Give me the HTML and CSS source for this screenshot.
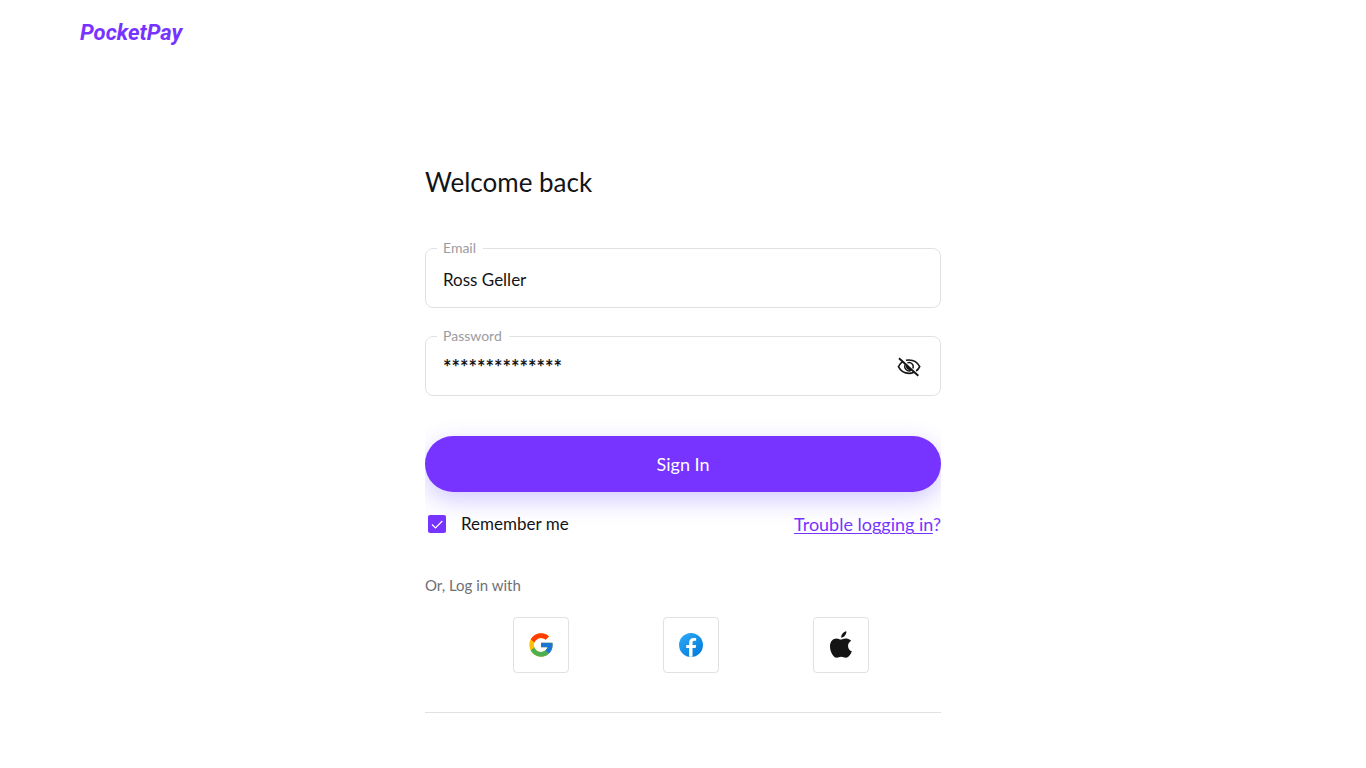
FILE: index.html
```html
<!DOCTYPE html>
<html lang="en">
<head>
<meta charset="utf-8">
<meta name="viewport" content="width=device-width, initial-scale=1">
<title>PocketPay – Sign in</title>
<link rel="stylesheet" href="styles.css">
</head>
<body>
<header class="header"><a class="logo" href="#">PocketPay</a></header>
<main class="login">
  <h1 class="title">Welcome back</h1>
  <form class="form">
    <fieldset class="field">
      <legend class="legend"><label for="email">Email</label></legend>
      <input class="input" id="email" type="text" value="Ross Geller">
    </fieldset>
    <fieldset class="field">
      <legend class="legend"><label for="password">Password</label></legend>
      <input class="input input-secret" id="password" type="text" value="**************">
      <button class="reveal" type="button" aria-label="Show password">
        <svg width="24" height="24" viewBox="0 0 24 24" fill="none" stroke="#141416" stroke-width="1.6">
          <path d="M6 6.300C3.800 7.700 2.200 9.600 1.400 11.700c2 4 6 6.700 10.600 6.700 1.800 0 3.500-.4 5-1.100M9 5.300c1-.2 2-.3 3-.3 4.700 0 8.700 2.700 10.700 6.700-.8 1.700-2 3.200-3.500 4.300"/>
          <path d="M8.600 9.200a4.200 4.200 0 0 0 5.800 5.900M10.400 7.900a4.200 4.200 0 0 1 5.500 5.500" stroke-width="1.400"/>
          <path d="M9.300 9.700l5 5a3.700 3.700 0 0 1-5-5z" fill="#141416" stroke="none"/>
          <path d="M2 3.200 21.300 20.800" stroke-width="1.900"/>
        </svg>
      </button>
    </fieldset>
    <button class="submit" type="submit">Sign In</button>
    <div class="options">
      <label class="remember"><input class="checkbox" type="checkbox" checked>Remember me</label>
      <span class="trouble"><a class="link" href="#">Trouble logging in</a>?</span>
    </div>
  </form>
  <p class="alternative">Or, Log in with</p>
  <div class="providers">
    <button class="provider" type="button" aria-label="Google">
      <svg width="28" height="28" viewBox="0 0 48 48">
        <path fill="#FFC107" d="M43.600 20.100H42V20H24v8h11.300C33.700 32.700 29.200 36 24 36c-6.600 0-12-5.400-12-12s5.400-12 12-12c3.100 0 5.800 1.200 8 3l5.700-5.700C34 6.100 29.300 4 24 4 13 4 4 13 4 24s9 20 20 20 20-9 20-20c0-1.300-.1-2.700-.4-3.900z"/>
        <path fill="#FF3D00" d="m6.300 14.700 6.600 4.800C14.700 15.100 19 12 24 12c3.100 0 5.800 1.200 8 3l5.700-5.700C34 6.100 29.300 4 24 4 16.300 4 9.700 8.300 6.300 14.700z"/>
        <path fill="#4CAF50" d="M24 44c5.200 0 9.900-2 13.400-5.200l-6.200-5.200C29.200 35.100 26.700 36 24 36c-5.200 0-9.600-3.300-11.300-7.900l-6.500 5C9.500 39.600 16.200 44 24 44z"/>
        <path fill="#1976D2" d="M43.600 20.100H42V20H24v8h11.300a12 12 0 0 1-4.100 5.600l6.200 5.200C37 39.200 44 34 44 24c0-1.300-.1-2.700-.4-3.900z"/>
      </svg>
    </button>
    <button class="provider" type="button" aria-label="Facebook">
      <svg width="28" height="28" viewBox="0 0 48 48">
        <defs><linearGradient id="blue" x1="10" y1="8" x2="40" y2="44" gradientUnits="userSpaceOnUse"><stop stop-color="#2AA4F4"/><stop offset="1" stop-color="#007AD9"/></linearGradient></defs>
        <circle cx="24" cy="24" r="20.500" fill="url(#blue)"/>
        <path fill="#fff" d="M26.600 29.300h5.400l.8-5.400h-6.200V21c0-2.200.7-4.200 2.800-4.200h3.400v-4.700c-.6-.1-1.800-.3-4.200-.3-4.900 0-7.800 2.600-7.800 8.500v3.600h-5v5.400h5v14.800a17 17 0 0 0 5.800 0z"/>
      </svg>
    </button>
    <button class="provider" type="button" aria-label="Apple">
      <svg width="30" height="30" viewBox="0 0 30 30" fill="#141414">
        <path d="M25.200 10.800c-.2.200-3.100 1.800-3.100 5.100 0 4 3.500 5.300 3.700 5.400 0 .1-.6 2-1.900 3.700-1.100 1.500-2.400 2.700-4.200 2.700s-2.400-1-4.500-1c-2 0-2.800 1-4.500 1s-2.900-1.200-4.200-3C4.900 22.500 4 19.500 4 16.300c0-5.100 3.300-7.800 6.500-7.800 1.700 0 3.200 1.100 4.300 1.100s2.700-1.200 4.700-1.200c.8 0 3.500.1 5.700 2.400z"/>
        <path d="M15.200 7.700c-.3-2.900 2.300-6 5.100-6.500.5 3-2.300 6.400-5.100 6.500z"/>
      </svg>
    </button>
  </div>
</main>
</body>
</html>
```
FILE: styles.css
```css
* {
  box-sizing: border-box;
}

body {
  margin: 0;
  background: #fff;
  color: #141416;
  font-family: Lato, "Open Sans", sans-serif;
  font-size: 17px;
  line-height: 24px;
}

button,
input {
  font: inherit;
  color: inherit;
}

.header {
  padding: 18px 80px;
}

.logo {
  display: block;
  width: max-content;
  color: #7733ff;
  font: italic bold 22px/30px Roboto, sans-serif;
  text-decoration: none;
}

.login {
  width: 100%;
  max-width: 516px;
  margin: 98px auto 0;
  border-bottom: 1px solid #e1e1e3;
  padding-bottom: 39px;
  overflow-x: clip;
}

.title {
  margin: 0 0 39px;
  font-size: 26px;
  font-weight: 400;
  line-height: 36px;
}

.form {
  display: flex;
  flex-direction: column;
}

.field {
  display: flex;
  align-items: center;
  min-width: 0;
  height: 69px;
  margin: 0 0 19px;
  border: 1px solid #e1e1e3;
  border-radius: 8px;
  padding: 0 19px 0 11px;
}

.legend {
  padding: 0 7px 0 6px;
  color: #9b9ba0;
  font-size: 14px;
  line-height: 18px;
}

.input {
  flex: 1;
  min-width: 0;
  height: 44px;
  border: 0;
  padding: 0 6px;
  background: none;
  outline: none;
}

.input-secret {
  font-size: 20px;
  font-weight: 700;
}

.reveal {
  display: flex;
  border: 0;
  padding: 0;
  background: none;
}

.submit {
  height: 56px;
  margin-top: 21px;
  border: 0;
  border-radius: 28px;
  background: #7733ff;
  color: #fff;
  font-size: 18px;
  box-shadow: 0 8px 24px rgba(80, 40, 255, 0.25);
}

.options {
  display: flex;
  justify-content: space-between;
  margin-top: 20px;
}

.remember {
  display: flex;
  align-items: center;
  gap: 15px;
}

.checkbox {
  appearance: none;
  width: 18px;
  height: 18px;
  margin: 0 0 0 3px;
  border-radius: 2px;
}

.checkbox:checked {
  background: #7733ff url("data:image/svg+xml,%3Csvg xmlns='http://www.w3.org/2000/svg' viewBox='0 0 18 18'%3E%3Cpath d='M4 9.500l3.500 3.500L14.300 6' fill='none' stroke='white' stroke-width='1.200'/%3E%3C/svg%3E");
}

.trouble,
.link {
  color: #7733ff;
}

.trouble {
  font-size: 18px;
}

.link {
  text-underline-offset: 2px;
  text-decoration-thickness: 1px;
}

.alternative {
  margin: 37px 0 20px;
  color: #6f6f73;
  font-size: 15px;
}

.providers {
  display: flex;
  justify-content: center;
  gap: 94px;
  padding-left: 16px;
}

.provider {
  display: flex;
  align-items: center;
  justify-content: center;
  width: 56px;
  height: 56px;
  border: 1px solid #e1e1e3;
  border-radius: 4px;
  padding: 0;
  background: #fff;
}
```
